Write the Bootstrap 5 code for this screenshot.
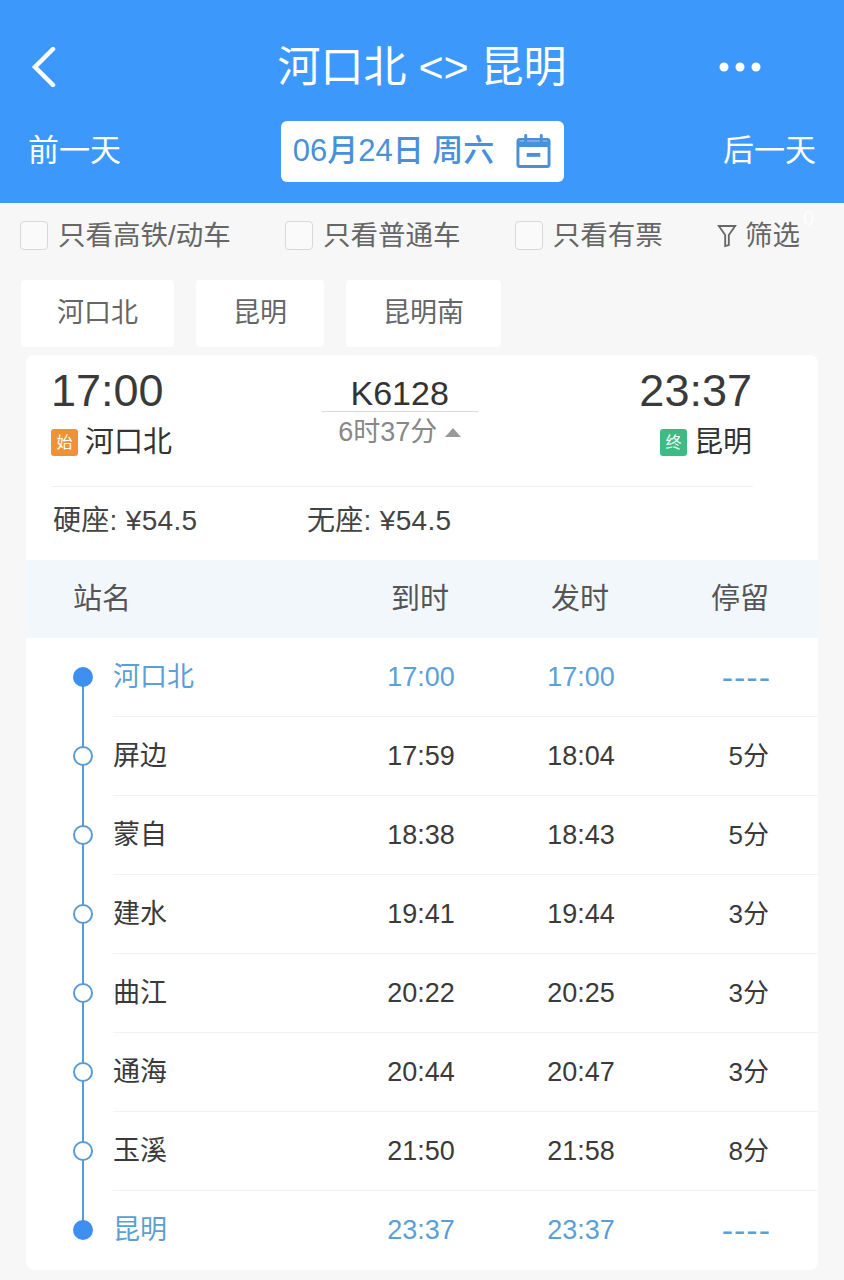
<!DOCTYPE html>
<html lang="zh">
<head>
  <meta charset="UTF-8">
  <title>河口北 &lt;&gt; 昆明</title>
  <link href="https://cdn.jsdelivr.net/npm/bootstrap@5.3.3/dist/css/bootstrap.min.css" rel="stylesheet">
  <style>
    body { background: #f7f7f7; color: #3a3a3a; font-family: "Liberation Sans", "Noto Sans CJK SC", sans-serif; width: 844px; height: 1280px; overflow: hidden; position: relative; }
    .top-bar { background: #3d98fc; height: 203px; color: #fff; padding: 0 28px; }
    .title-row { height: 121px; padding-top: 13px; }
    .back-link { width: 110px; padding-left: 3px; }
    .title-text { font-size: 43px; line-height: 1; }
    .more-dots { width: 110px; padding-right: 55px; }
    .date-row { height: 60px; font-size: 31px; }
    .date-box { background: #fff; color: #4a90d9; width: 283px; height: 61px; border-radius: 6px; font-size: 31px; gap: 22px; font-weight: 500; }
    .filter-row { height: 77px; padding: 0 20px 12px; font-size: 27.5px; color: #666; }
    .fake-check { width: 28px; height: 29px; border: 1px solid #d8d8d8; border-radius: 4px; background: #fafafa; }
    .filter-item { gap: 10px; }
    .ghost-num { position: absolute; left: 803px; top: 203px; font-size: 20px; color: #fff; opacity: .8; }
    .tab-row { padding-left: 21px; gap: 22px; height: 67px; }
    .stop-tab { background: #fff; height: 67px; border-radius: 4px; font-size: 27px; color: #666; }
    .tab-a { width: 153px; } .tab-b { width: 128px; } .tab-c { width: 155px; }
    .train-card { background: #fff; margin: 8px 26px 0; border-radius: 8px; height: 915px; overflow: hidden; }
    .train-top { height: 131px; padding: 13px 66px 0 25px; }
    .big-time { font-size: 45px; line-height: 1; }
    .st-name { font-size: 29px; line-height: 30px; margin-top: 14px; color: #333; }
    .st-tag { width: 27px; height: 27px; border-radius: 3px; color: #fff; font-size: 16px; line-height: 27px; text-align: center; margin-right: 7px; }
    .tag-start { background: #ef9235; } .tag-end { background: #3dbb85; }
    .mid-col { width: 156px; margin-top: 8px; margin-right: 12px; }
    .train-no { font-size: 34px; line-height: 1; text-align: center; border-bottom: 1px solid #d9d9d9; padding-bottom: 1px; color: #333; }
    .dur-text { font-size: 27px; line-height: 1; color: #888; margin-top: 7px; }
    .tri-up { border-left: 8px solid transparent; border-right: 8px solid transparent; border-bottom: 9px solid #999; margin-left: 8px; }
    .price-row { margin: 0 65px 0 25px; border-top: 1px solid #f0f0f0; height: 74px; padding: 0 0 6px 2px; font-size: 28px; letter-spacing: .3px; color: #444; }
    .price-a { width: 254px; }
    .head-row { background: #f2f7fc; height: 78px; padding: 2px 0 0 47px; font-size: 29px; color: #555; }
    .cell-name { width: 267px; flex: none; font-size: 29px; }
    .cell-time { width: 160px; flex: none; text-align: center; font-size: 27px; }
    .head-row .cell-time { font-size: 29px; }
    .stop-row { height: 79px; position: relative; padding-left: 87px; }
    .dot-mark { position: absolute; left: 47px; top: 29px; width: 20px; height: 20px; border-radius: 50%; background: #fff; border: 2px solid #5b9bd5; z-index: 1; }
    .stop-row.is-end .dot-mark { background: #3d8ff0; border-color: #3d8ff0; }
    .stop-row::before { content: ""; position: absolute; left: 56px; top: 0; bottom: 0; width: 2px; background: #5b9bd5; }
    .stop-row:first-of-type::before { top: 39px; }
    .stop-row:last-of-type::before { bottom: 40px; }
    .stop-body { height: 100%; border-bottom: 1px solid #f2f2f2; }
    .stop-row:last-of-type .stop-body { border-bottom: 0; }
    .stop-row.is-end .stop-body { color: #5a9fd6; }
    .stop-name { width: 228px; flex: none; font-size: 27px; }
    .stay-cell { flex: 1; text-align: right; padding-right: 49px; font-size: 26px; }
    .is-end .stay-cell { font-size: 34px; letter-spacing: 1px; padding-right: 47px; }
  </style>
</head>
<body>
  <div class="top-bar">
    <div class="title-row d-flex align-items-center justify-content-between">
      <div class="back-link">
        <svg width="26" height="40" viewBox="0 0 26 40" fill="none" stroke="#fff" stroke-width="4.5" stroke-linecap="round"><path d="M22 2 L4 20 L22 38"/></svg>
      </div>
      <div class="title-text">河口北 &lt;&gt; 昆明</div>
      <div class="more-dots d-flex justify-content-end">
        <svg width="42" height="10" viewBox="0 0 42 10" fill="#fff"><circle cx="5" cy="5" r="4.5"/><circle cx="21" cy="5" r="4.5"/><circle cx="37" cy="5" r="4.5"/></svg>
      </div>
    </div>
    <div class="date-row d-flex align-items-center justify-content-between">
      <div>前一天</div>
      <div class="date-box d-flex align-items-center justify-content-center">
        <span>06月24日 周六</span>
        <svg width="35" height="36" viewBox="0 0 36 36" fill="none" stroke="#4a90d9" stroke-width="3"><rect x="2" y="6" width="32" height="28" rx="2"/><path d="M2 11 H34" stroke-width="6"/><path d="M10 2 V9 M26 2 V9" stroke-linecap="round"/><path d="M11 22 H25" stroke-width="4"/></svg>
      </div>
      <div>后一天</div>
    </div>
  </div>

  <div class="filter-row d-flex align-items-center">
    <div class="filter-item d-flex align-items-center"><span class="fake-check"></span><span>只看高铁/动车</span></div>
    <div class="filter-item d-flex align-items-center ms-auto"><span class="fake-check"></span><span>只看普通车</span></div>
    <div class="filter-item d-flex align-items-center ms-auto"><span class="fake-check"></span><span>只看有票</span></div>
    <div class="d-flex align-items-center ms-auto gap-2 pe-4">
      <svg width="20" height="26" viewBox="0 0 22 26" fill="none" stroke="#666" stroke-width="2"><path d="M2 2 H20 L13 12 V23 L9 24 V12 Z"/></svg>
      <span>筛选</span>
    </div>
  </div>
  <span class="ghost-num">0</span>

  <div class="tab-row d-flex">
    <div class="stop-tab tab-a d-flex align-items-center justify-content-center">河口北</div>
    <div class="stop-tab tab-b d-flex align-items-center justify-content-center">昆明</div>
    <div class="stop-tab tab-c d-flex align-items-center justify-content-center">昆明南</div>
  </div>

  <div class="train-card">
    <div class="train-top d-flex justify-content-between align-items-start">
      <div>
        <div class="big-time">17:00</div>
        <div class="st-name d-flex align-items-center"><span class="st-tag tag-start">始</span>河口北</div>
      </div>
      <div class="mid-col">
        <div class="train-no">K6128</div>
        <div class="dur-text d-flex align-items-center justify-content-center">6时37分<span class="tri-up"></span></div>
      </div>
      <div class="text-end">
        <div class="big-time">23:37</div>
        <div class="st-name d-flex align-items-center justify-content-end"><span class="st-tag tag-end">终</span>昆明</div>
      </div>
    </div>
    <div class="price-row d-flex align-items-center">
      <div class="price-a">硬座: ¥54.5</div>
      <div>无座: ¥54.5</div>
    </div>

    <div class="head-row d-flex align-items-center">
      <div class="cell-name">站名</div>
      <div class="cell-time">到时</div>
      <div class="cell-time">发时</div>
      <div class="cell-time">停留</div>
    </div>

    <div class="stop-list">
      <div class="stop-row is-end"><span class="dot-mark"></span><div class="stop-body d-flex align-items-center"><div class="stop-name">河口北</div><div class="cell-time">17:00</div><div class="cell-time">17:00</div><div class="stay-cell">----</div></div></div>
      <div class="stop-row"><span class="dot-mark"></span><div class="stop-body d-flex align-items-center"><div class="stop-name">屏边</div><div class="cell-time">17:59</div><div class="cell-time">18:04</div><div class="stay-cell">5分</div></div></div>
      <div class="stop-row"><span class="dot-mark"></span><div class="stop-body d-flex align-items-center"><div class="stop-name">蒙自</div><div class="cell-time">18:38</div><div class="cell-time">18:43</div><div class="stay-cell">5分</div></div></div>
      <div class="stop-row"><span class="dot-mark"></span><div class="stop-body d-flex align-items-center"><div class="stop-name">建水</div><div class="cell-time">19:41</div><div class="cell-time">19:44</div><div class="stay-cell">3分</div></div></div>
      <div class="stop-row"><span class="dot-mark"></span><div class="stop-body d-flex align-items-center"><div class="stop-name">曲江</div><div class="cell-time">20:22</div><div class="cell-time">20:25</div><div class="stay-cell">3分</div></div></div>
      <div class="stop-row"><span class="dot-mark"></span><div class="stop-body d-flex align-items-center"><div class="stop-name">通海</div><div class="cell-time">20:44</div><div class="cell-time">20:47</div><div class="stay-cell">3分</div></div></div>
      <div class="stop-row"><span class="dot-mark"></span><div class="stop-body d-flex align-items-center"><div class="stop-name">玉溪</div><div class="cell-time">21:50</div><div class="cell-time">21:58</div><div class="stay-cell">8分</div></div></div>
      <div class="stop-row is-end"><span class="dot-mark"></span><div class="stop-body d-flex align-items-center"><div class="stop-name">昆明</div><div class="cell-time">23:37</div><div class="cell-time">23:37</div><div class="stay-cell">----</div></div></div>
    </div>
  </div>

  <script src="https://cdn.jsdelivr.net/npm/bootstrap@5.3.3/dist/js/bootstrap.bundle.min.js"></script>
</body>
</html>
